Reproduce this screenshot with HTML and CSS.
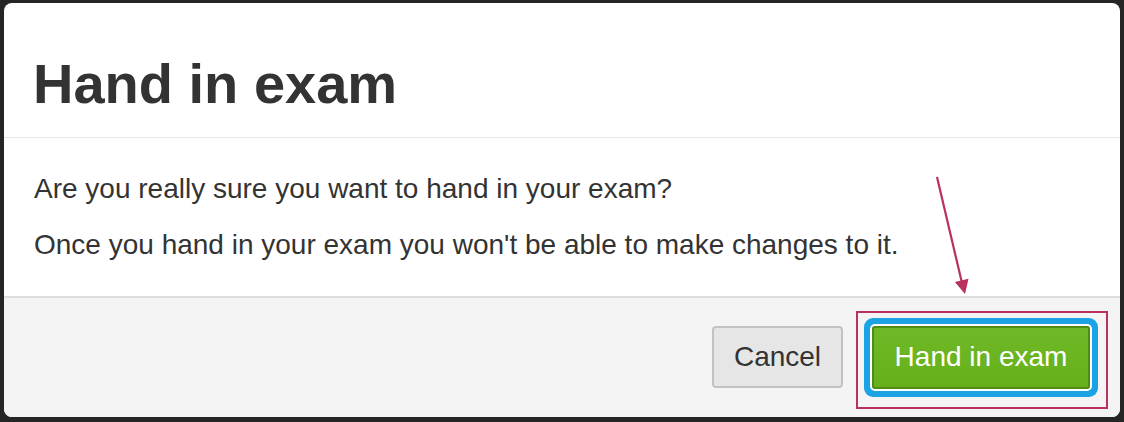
FILE: index.html
```html
<!DOCTYPE html>
<html lang="en">

<head>
  <meta charset="UTF-8">
  <meta name="viewport" content="width=device-width, initial-scale=1.0">
  <title>Hand in exam</title>
  <link rel="stylesheet" href="styles.css">
</head>

<body>
  <div class="page">
    <div class="modal">
      <div class="modal-header">
        <h1>Hand in exam</h1>
      </div>

      <div class="modal-body">
        <p>Are you really sure you want to hand in your exam?</p>
        <p>Once you hand in your exam you won't be able to make changes to it.</p>
      </div>

      <div class="modal-footer">
        <button class="btn btn-cancel">Cancel</button>
        <button class="btn btn-submit">Hand in exam</button>
      </div>
    </div>

    <!-- Annotation drawn over the screenshot -->
    <svg class="annotation" width="1124" height="422" viewBox="0 0 1124 422">
      <line x1="937" y1="177" x2="962" y2="283" stroke="#b8315f" stroke-width="2.2" />
      <polygon points="965,294 968.5,278.8 954.9,282" fill="#b8315f" />
      <rect x="857" y="312" width="250" height="96" fill="none" stroke="#b8315f" stroke-width="2" />
    </svg>
  </div>
</body>

</html>
```

FILE: styles.css
```css
/* General Reset */
* {
  margin: 0;
  padding: 0;
  box-sizing: border-box;
}

body {
  font-family: 'Liberation Sans', Arial, sans-serif;
  background-color: #252525;
  color: #333;
  width: 1124px;
  height: 422px;
  overflow: hidden;
}

.page {
  position: relative;
  height: 422px;
  padding: 3px 4px 0 4px;
}

/* Dialog box */
.modal {
  background-color: #fff;
  border-radius: 8px;
  overflow: hidden;
  height: 414px;
}

.modal-header {
  padding: 49px 30px 21px 29px;
  border-bottom: 1px solid #e8e8e8;
}

.modal-header h1 {
  font-size: 56px;
  line-height: 64px;
  font-weight: bold;
  color: #333;
}

.modal-body {
  padding: 33px 30px 33px 30px;
  height: 158px;
}

.modal-body p {
  font-size: 28px;
  line-height: 36px;
}

.modal-body p + p {
  margin-top: 20px;
}

/* Footer with the buttons */
.modal-footer {
  display: flex;
  justify-content: flex-end;
  align-items: center;
  gap: 29px;
  height: 121px;
  padding: 28px 30px 29px 30px;
  background-color: #f4f4f4;
  border-top: 2px solid #dedede;
}

.btn {
  font-family: 'Liberation Sans', Arial, sans-serif;
  font-size: 28px;
  height: 62px;
  border-radius: 4px;
  cursor: pointer;
}

.btn-cancel {
  width: 131px;
  color: #333;
  background-color: #e6e6e6;
  border: 2px solid #c2c2c2;
}

.btn-submit {
  width: 218px;
  height: 63px;
  color: #fff;
  background: linear-gradient(#6fb926, #66b01c);
  border: 2px solid #4f8c15;
  box-shadow: 0 0 0 2px #fff, 0 0 0 8px #1ba3e3;
  border-radius: 3px;
}

/* Annotation overlay */
.annotation {
  position: absolute;
  top: 0;
  left: 0;
  pointer-events: none;
}
```
